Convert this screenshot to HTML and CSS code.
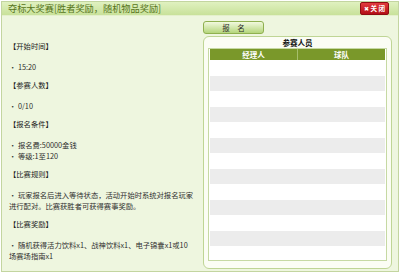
FILE: index.html
```html
<html>
  <head>
    <title>夺标大奖赛</title>
    <link rel="stylesheet" href="styles.css">
  </head>
  <body>
    <div class="dialog">
      <div class="dialog-head">
        <span class="dialog-title">夺标大奖赛[胜者奖励，随机物品奖励]</span>
        <button type="button" class="close-btn"><span class="close-x">✖</span> 关 闭</button>
      </div>

      <div class="dialog-body">
        <div class="info">
          <p class="info-label">【开始时间】</p>
          <p class="info-item">· 15:20</p>
          <p class="info-label">【参赛人数】</p>
          <p class="info-item">· 0/10</p>
          <p class="info-label">【报名条件】</p>
          <p class="info-item">· 报名费:50000金钱<br>· 等级:1至120</p>
          <p class="info-label">【比赛规则】</p>
          <p class="info-item">· 玩家报名后进入等待状态，活动开始时系统对报名玩家<br>进行配对。比赛获胜者可获得赛事奖励。</p>
          <p class="info-label">【比赛奖励】</p>
          <p class="info-item">· 随机获得活力饮料x1、战神饮料x1、电子锦囊x1或10<br>场赛场指南x1</p>
        </div>

        <div class="members">
          <button type="button" class="join-btn">报　名</button>
          <div class="member-panel">
            <div class="member-title">参赛人员</div>
            <div class="member-box">
              <table class="member-table">
                <thead>
                  <tr><th>经理人</th><th>球队</th></tr>
                </thead>
                <tbody>
                  <tr><td></td><td></td></tr>
                  <tr><td></td><td></td></tr>
                  <tr><td></td><td></td></tr>
                  <tr><td></td><td></td></tr>
                  <tr><td></td><td></td></tr>
                  <tr><td></td><td></td></tr>
                  <tr><td></td><td></td></tr>
                  <tr><td></td><td></td></tr>
                  <tr><td></td><td></td></tr>
                  <tr><td></td><td></td></tr>
                  <tr><td></td><td></td></tr>
                  <tr><td></td><td></td></tr>
                </tbody>
              </table>
            </div>
          </div>
        </div>
      </div>
    </div>
  </body>
</html>
```

FILE: styles.css
```css
* {
  box-sizing: border-box;
}

body {
  margin: 0;
  background: #ffffff;
  font-family: "Noto Sans CJK SC", "DejaVu Sans", sans-serif;
}

.dialog {
  width: 398px;
  height: 271px;
  margin: 1px 0 0 1px;
  border: 1px solid #c3d5a0;
  background: #eef6df;
  display: flex;
  flex-direction: column;
}

/* title bar */
.dialog-head {
  height: 21px;
  display: flex;
  align-items: center;
  justify-content: space-between;
  padding: 0 9px 0 6px;
  background: linear-gradient(#e0f1c0, #c8e19a);
  border-bottom: 1px solid #e4f0cc;
}
.dialog-title {
  font-size: 9.2px;
  line-height: 1;
  color: #56741a;
}
.close-btn {
  width: 29px;
  height: 13px;
  padding: 0;
  border: 1px solid #8e0c12;
  border-radius: 2px;
  background: linear-gradient(#e23a3e, #b30f16);
  color: #ffffff;
  font-family: "Noto Sans CJK SC", sans-serif;
  font-size: 6.5px;
  font-weight: bold;
  line-height: 11px;
}
.close-x {
  font-family: "DejaVu Sans", sans-serif;
  font-size: 6px;
}

.dialog-body {
  flex: 1;
  display: flex;
  padding: 5px 6px 4px 7px;
}

/* left side text */
.info {
  width: 194px;
  padding-top: 20px;
  font-size: 7.3px;
  line-height: 11px;
  color: #2e2e2e;
}
.info p {
  margin: 0;
}
.info-label {
  color: #1a1a1a;
  margin-bottom: 10px !important;
}
.info-item {
  margin-bottom: 7px !important;
}

/* right side */
.members {
  width: 189px;
  display: flex;
  flex-direction: column;
}
.join-btn {
  width: 61px;
  height: 13px;
  margin-bottom: 2px;
  padding: 0;
  border: 1px solid #8fb050;
  border-radius: 3px;
  background: linear-gradient(#f1f9de, #b5d67c);
  color: #2a2a2a;
  font-family: "Noto Sans CJK SC", sans-serif;
  font-size: 7.5px;
  line-height: 11px;
}
.member-panel {
  flex: 1;
  display: flex;
  flex-direction: column;
  padding: 0 4px 7px;
  border: 1px solid #bfd595;
  border-radius: 6px;
  background: #fbfdf4;
}
.member-title {
  height: 11px;
  text-align: center;
  font-size: 7.5px;
  font-weight: bold;
  line-height: 11px;
  color: #111111;
}
.member-box {
  flex: 1;
  padding: 0 1px;
  border: 1px solid #c6d9a3;
  background: #ffffff;
}
.member-table {
  width: 100%;
  table-layout: fixed;
  border-collapse: collapse;
}
.member-table th {
  width: 50%;
  height: 11px;
  padding: 0;
  background: #7a982a;
  color: #ffffff;
  font-size: 7.5px;
  font-weight: bold;
  line-height: 11px;
}
.member-table th + th {
  border-left: 1px solid #a6bf6c;
}
.member-table td {
  height: 15.5px;
  padding: 0;
}
.member-table tbody tr:nth-child(even) {
  background: #ececec;
}
```
